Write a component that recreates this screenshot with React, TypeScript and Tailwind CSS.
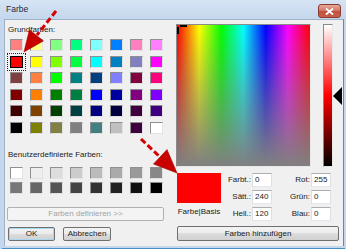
import React from "react";

const basic = [
  ["#FF8080", "#FFFF80", "#80FF80", "#00FF80", "#80FFFF", "#0080FF", "#FF80C0", "#FF80FF"],
  ["#FF0000", "#FFFF00", "#80FF00", "#00FF40", "#00FFFF", "#0080C0", "#8080C0", "#FF00FF"],
  ["#804040", "#FF8040", "#00FF00", "#008080", "#004080", "#8080FF", "#800040", "#FF0080"],
  ["#800000", "#FF8000", "#008000", "#008040", "#0000FF", "#0000A0", "#800080", "#8000FF"],
  ["#400000", "#804000", "#004000", "#004040", "#000080", "#000040", "#400040", "#400080"],
  ["#000000", "#808000", "#808040", "#808080", "#408080", "#C0C0C0", "#400040", "#FFFFFF"],
];

const grays = [255, 238, 221, 204, 187, 170, 153, 136, 119, 102, 85, 68, 51, 34, 17, 0].map(
  (v) => `rgb(${v},${v},${v})`
);
const custom = [grays.slice(0, 8), grays.slice(8)];

function Swatch({ c, selected }: { c: string; selected?: boolean }) {
  if (selected) {
    return (
      <div className="w-[13px] h-[12px] outline outline-1 outline-dotted outline-[#222] outline-offset-[2px]">
        <div className="w-full h-full border border-black" style={{ background: c }} />
      </div>
    );
  }
  return (
    <div
      className="w-[13px] h-[12px] border border-t-[#8f8f8f] border-l-[#8f8f8f] border-r-[#e2e2e2] border-b-[#e2e2e2]"
      style={{ background: c }}
    />
  );
}

function Field({ label, value, lw }: { label: string; value: string; lw: string }) {
  return (
    <div className="flex items-center h-[14px]">
      <span className={`${lw} text-right pr-[1px] text-[#1a1a1a]`}>{label}</span>
      <div className="w-[20px] h-[14px] bg-white border border-t-[#abadb3] border-l-[#dbdfe6] border-r-[#dbdfe6] border-b-[#e3e9ef] pl-[2px] leading-[12px] text-[#1a1a1a]">
        {value}
      </div>
    </div>
  );
}

const btn =
  "h-[14px] rounded-[2px] border border-[#707070] bg-[linear-gradient(#f3f3f3,#ebebeb_50%,#dddddd_50%,#d0d0d0)] text-[8px] leading-none text-[#1a1a1a] flex items-center justify-center";

export default function App() {
  return (
    <div className="relative w-[346px] h-[249px] overflow-hidden bg-[#c4d7ed] font-['Liberation_Sans',Arial,sans-serif] text-[8px] flex flex-col">
      {/* title bar */}
      <div className="h-[19px] flex items-center pl-[6px] pr-[5px] bg-[linear-gradient(#d6e4f4,#c4d7ed)]">
        <span className="text-[8.5px] text-[#1f2a38]">Farbe</span>
        <div className="ml-auto mt-[3px] w-[23px] h-[14px] rounded-[3px] border border-[#8a3b30] bg-[linear-gradient(#e8a898,#d27a68_45%,#c2503e_55%,#c8604c)] flex items-center justify-center">
          <svg width="9" height="7" viewBox="0 0 9 7">
            <path d="M1 0.5 L8 6.5 M8 0.5 L1 6.5" stroke="#fff" strokeWidth="1.8" />
          </svg>
        </div>
      </div>

      {/* body */}
      <div className="ml-[4px] mr-[2px] h-[227px] bg-[#f0f0f0] border-t border-l border-[#9fb1c6] border-r border-r-[#4a90c0] flex">
        {/* left column */}
        <div className="w-[171px] flex flex-col">
          <div className="mt-[5px] ml-[3px] h-[10px] leading-[10px] text-[#1a1a1a]">Grundfarben:</div>
          <div className="mt-[4px] ml-[5px] flex flex-col gap-y-[4.6px]">
            {basic.map((row, i) => (
              <div key={i} className="flex gap-x-[7px]">
                {row.map((c, j) => (
                  <Swatch key={j} c={c} selected={i === 1 && j === 0} />
                ))}
              </div>
            ))}
          </div>
          <div className="mt-[16px] ml-[3px] h-[10px] leading-[10px] text-[#1a1a1a]">
            Benutzerdefinierte Farben:
          </div>
          <div className="mt-[7px] ml-[5px] flex flex-col gap-y-[3px]">
            {custom.map((row, i) => (
              <div key={i} className="flex gap-x-[7px]">
                {row.map((c, j) => (
                  <Swatch key={j} c={c} />
                ))}
              </div>
            ))}
          </div>
          <div className="mt-[13px] ml-[2px] w-[157px] h-[14px] rounded-[2px] border border-[#adb2b5] bg-[#f4f4f4] text-[#a3a3a3] flex items-center justify-center">
            Farben definieren &gt;&gt;
          </div>
          <div className="mt-[6px] ml-[3px] flex gap-[8px]">
            <div className={`${btn} w-[47px] border-[#3c7fb1] shadow-[inset_0_0_0_1px_#a8d8f0]`}>OK</div>
            <div className={`${btn} w-[48px]`}>Abbrechen</div>
          </div>
        </div>

        {/* right column */}
        <div className="flex flex-col">
          <div className="mt-[4px] flex">
            <div className="relative w-[135px] h-[143px] border-t border-l border-[#8a8a8a] border-r border-b border-r-[#e8e8e8] border-b-[#e8e8e8] bg-[linear-gradient(to_bottom,rgba(128,128,128,0),#808080),linear-gradient(to_right,#ff0000,#ffff00,#00ff00,#00ffff,#0000ff,#ff00ff,#ff0000)]">
              <div className="absolute left-[3px] top-0 w-[7px] h-[2px] bg-black" />
              <div className="absolute left-0 top-[2px] w-[2px] h-[7px] bg-black" />
            </div>
            <div className="relative ml-[12px] w-[10px] h-[143px]">
              <div className="w-[10px] h-[143px] border-t border-l border-[#8a8a8a] border-r border-b border-r-[#e8e8e8] border-b-[#e8e8e8] bg-[linear-gradient(to_bottom,#ffffff,#ff0000_50%,#000000)]" />
              <svg className="absolute left-[10px] top-[63px]" width="9" height="18" viewBox="0 0 9 18">
                <polygon points="0,9 9,0 9,18" fill="#000" />
              </svg>
            </div>
          </div>

          <div className="mt-[6px] flex">
            <div className="ml-[1px] w-[44px] flex flex-col items-center">
              <div className="w-[44px] h-[30px] bg-[#ff0000]" />
              <div className="mt-[4px] leading-[10px] text-[#1a1a1a] whitespace-nowrap">Farbe|Basis</div>
            </div>
            <div className="flex flex-col gap-[3px]">
              <Field label="Farbt.:" value="0" lw="w-[31px]" />
              <Field label="Sätt.:" value="240" lw="w-[31px]" />
              <Field label="Hell.:" value="120" lw="w-[31px]" />
            </div>
            <div className="flex flex-col gap-[3px]">
              <Field label="Rot:" value="255" lw="w-[39px]" />
              <Field label="Grün:" value="0" lw="w-[39px]" />
              <Field label="Blau:" value="0" lw="w-[39px]" />
            </div>
          </div>
          <div className={`${btn} mt-[5px] ml-[1px] w-[162px] h-[15px]`}>Farben hinzufügen</div>
        </div>
      </div>
      <div className="flex-1 ml-[2px] mr-[1px] border-b border-[#4a90c0]" />

      {/* annotation arrows */}
      <svg className="absolute left-0 top-0 pointer-events-none" width="346" height="249" viewBox="0 0 346 249">
        <line x1="56" y1="11" x2="37" y2="35" stroke="#d40000" strokeWidth="3" strokeDasharray="6 3" />
        <polygon points="24,52 29.4,29.7 43.4,40.9" fill="#c80000" stroke="#a00000" strokeWidth="0.6" />
        <line x1="141" y1="139" x2="159" y2="156" stroke="#d40000" strokeWidth="3" strokeDasharray="6 3" />
        <polygon points="177,173 153.5,164 167,149.6" fill="#c80000" stroke="#a00000" strokeWidth="0.6" />
      </svg>
    </div>
  );
}
